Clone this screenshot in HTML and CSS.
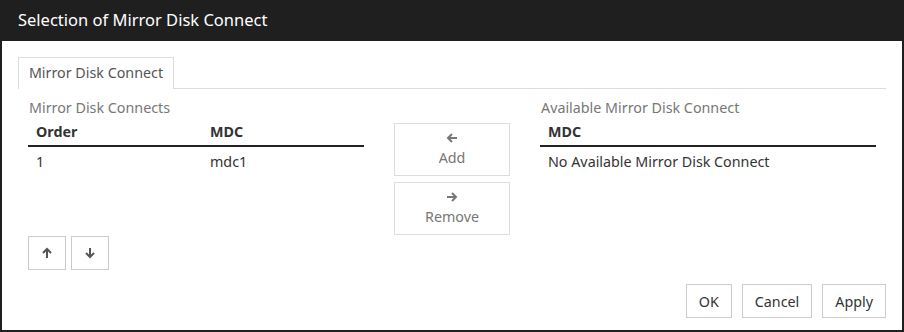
FILE: index.html
```html
<!DOCTYPE html>
<html lang="en">

<head>
    <meta charset="UTF-8">
    <meta name="viewport" content="width=device-width, initial-scale=1.0">
    <title>Selection of Mirror Disk Connect</title>
    <link rel="stylesheet" href="styles.css">
</head>

<body>
    <!-- dialog -->
    <div class="dialog">
        <div class="dialog-title">Selection of Mirror Disk Connect</div>
        <div class="dialog-body">
            <!-- tabs -->
            <ul class="tabs">
                <li class="tab on">Mirror Disk Connect</li>
            </ul>
            <div class="panel">
                <!-- selected list -->
                <div class="col">
                    <div class="caption">Mirror Disk Connects</div>
                    <div class="table-box">
                        <table class="grid">
                            <thead>
                                <tr>
                                    <th class="c-order">Order</th>
                                    <th>MDC</th>
                                </tr>
                            </thead>
                            <tbody>
                                <tr>
                                    <td>1</td>
                                    <td>mdc1</td>
                                </tr>
                            </tbody>
                        </table>
                    </div>
                    <div class="move-btns">
                        <a class="btn icon-btn">
                            <svg width="12" height="12" viewBox="0 0 12 12"><path d="M6 11V2M2 6l4-4 4 4" fill="none" stroke="#555" stroke-width="2"/></svg>
                        </a>
                        <a class="btn icon-btn">
                            <svg width="12" height="12" viewBox="0 0 12 12"><path d="M6 1v9M2 6l4 4 4-4" fill="none" stroke="#555" stroke-width="2"/></svg>
                        </a>
                    </div>
                </div>
                <!-- add / remove -->
                <div class="mid">
                    <a class="btn side-btn disabled">
                        <svg width="12" height="12" viewBox="0 0 12 12"><path d="M11 6H2M6 2L2 6l4 4" fill="none" stroke="#777" stroke-width="2"/></svg>
                        <span>Add</span>
                    </a>
                    <a class="btn side-btn disabled">
                        <svg width="12" height="12" viewBox="0 0 12 12"><path d="M1 6h9M6 2l4 4-4 4" fill="none" stroke="#777" stroke-width="2"/></svg>
                        <span>Remove</span>
                    </a>
                </div>
                <!-- available list -->
                <div class="col">
                    <div class="caption">Available Mirror Disk Connect</div>
                    <table class="grid">
                        <thead>
                            <tr>
                                <th>MDC</th>
                            </tr>
                        </thead>
                        <tbody>
                            <tr>
                                <td>No Available Mirror Disk Connect</td>
                            </tr>
                        </tbody>
                    </table>
                </div>
            </div>
            <!-- footer -->
            <div class="footer">
                <a class="btn">OK</a>
                <a class="btn">Cancel</a>
                <a class="btn">Apply</a>
            </div>
        </div>
    </div>
</body>

</html>
```

FILE: styles.css
```css
* {
    margin: 0;
    padding: 0;
    list-style: none;
    box-sizing: border-box;
}

body {
    font-family: "Noto Sans", "Liberation Sans", sans-serif;
    font-size: 14.3px;
    color: #333;
    background-color: #fff;
}

.dialog {
    width: 904px;
    height: 332px;
    border: 2px solid #1f1f1f;
    border-top: 0;
    display: flex;
    flex-direction: column;
}

.dialog-title {
    height: 41px;
    line-height: 40px;
    padding-left: 16px;
    background-color: #1f1f1f;
    color: #fff;
    font-size: 16.5px;
}

.dialog-body {
    flex: 1;
    padding: 16px 16px 0 16px;
    display: flex;
    flex-direction: column;
}

.tabs {
    display: flex;
    border-bottom: 1px solid #ddd;
    height: 32px;
}

.tab {
    height: 32px;
    width: 156px;
    line-height: 30px;
    text-align: center;
    color: #555;
    border: 1px solid #ddd;
    border-bottom: 0;
    background-color: #fff;
    margin-bottom: -1px;
}

.panel {
    display: flex;
    gap: 30px;
    padding: 9px 10px 0 10px;
}

.col {
    width: 336px;
}

.caption {
    height: 20px;
    line-height: 20px;
    color: #777;
    padding-left: 1px;
}

.table-box {
    height: 118px;
}

.grid {
    width: 100%;
    border-collapse: collapse;
}

.grid th {
    text-align: left;
    font-weight: bold;
    height: 28px;
    padding: 0 8px;
    border-bottom: 2px solid #222;
}

.grid .c-order {
    width: 174px;
}

.grid td {
    height: 30px;
    padding: 0 8px;
}

.btn {
    display: inline-flex;
    align-items: center;
    justify-content: center;
    height: 34px;
    padding: 0 12px;
    border: 1px solid #ccc;
    background-color: #fff;
    color: #333;
    cursor: pointer;
}

.move-btns {
    display: flex;
    gap: 5px;
}

.icon-btn {
    width: 38px;
    padding: 0;
}

.mid {
    width: 116px;
    padding-top: 25px;
    display: flex;
    flex-direction: column;
    gap: 6px;
}

.side-btn {
    flex-direction: column;
    height: 53px;
    padding: 0;
    border-color: #ddd;
    gap: 5px;
}

.side-btn span {
    line-height: 18px;
}

.disabled {
    color: #777;
}

.footer {
    display: flex;
    justify-content: flex-end;
    gap: 10px;
    margin-top: auto;
    padding-bottom: 12px;
}
```
